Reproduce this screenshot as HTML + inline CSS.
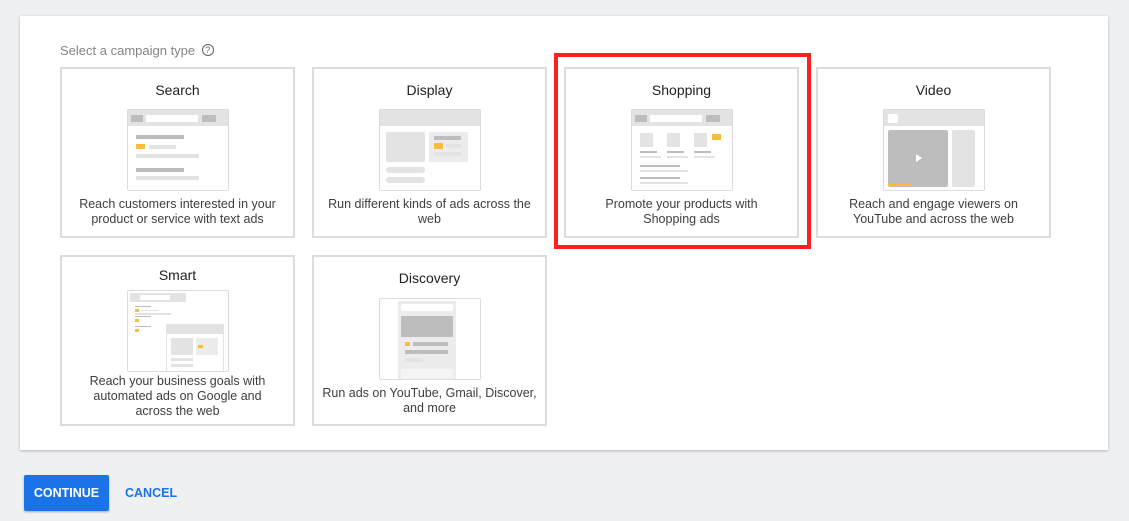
<!DOCTYPE html><html><head><style>
*{margin:0;padding:0;box-sizing:border-box}
body{width:1129px;height:521px;background:#eff0f2;font-family:"Liberation Sans",Arial,sans-serif;position:relative;overflow:hidden;color:#3c4043}
.panel{position:absolute;left:20px;top:16px;width:1088px;height:434px;background:#fff;box-shadow:0 1px 3px rgba(0,0,0,.25)}
.lbl{position:absolute;left:60px;top:43px;font-size:13px;color:#80868b}
.q{display:inline-block;width:12px;height:12px;border:1.3px solid #5f6368;border-radius:50%;font-size:9px;text-align:center;line-height:10px;color:#5f6368;vertical-align:2px;margin-left:3px}
.card{position:absolute;width:235px;height:171px;border:2px solid #dadce0;background:#fff}
.t{position:absolute;left:0;right:0;text-align:center;font-size:14px;color:#202124}
.d{position:absolute;left:0;right:0;text-align:center;font-size:12.5px;line-height:15px;color:#3c4043}
.ill{position:absolute;left:65px;width:102px;height:82px;border:1px solid #dadce0;border-radius:2px;background:#fff;overflow:hidden}
.ill div{position:absolute}
.g{background:#e3e3e3}.gd{background:#bdbdbd}.gl{background:#ececec}.y{background:#fbbc3c}
.red{position:absolute;left:554px;top:53px;width:257px;height:196px;border:4px solid #ff1f1f}
.btn{position:absolute;left:24px;top:475px;width:85px;height:36px;background:#1a73e8;color:#fff;font-size:12.5px;font-weight:bold;text-align:center;line-height:36px;border-radius:2px;box-shadow:0 1px 2px rgba(0,0,0,.3)}
.cancel{position:absolute;left:125px;top:486px;color:#1a73e8;font-size:12.5px;font-weight:bold}
</style></head><body>
<div class="panel"></div>
<div class="lbl">Select a campaign type <span class="q">?</span></div>

<div class="card" style="left:60px;top:67px">
<div class="t" style="top:13px">Search</div>
<div class="ill" style="top:40px">
<div class="g" style="left:0;top:0;width:102px;height:16px"></div>
<div class="gd" style="left:3px;top:5px;width:12px;height:7px"></div>
<div style="left:18px;top:5px;width:52px;height:7px;background:#fff"></div>
<div class="gd" style="left:74px;top:5px;width:14px;height:7px"></div>
<div class="gd" style="left:8px;top:25px;width:48px;height:4px"></div>
<div class="y" style="left:8px;top:34px;width:9px;height:5px"></div>
<div class="g" style="left:21px;top:35px;width:27px;height:4px"></div>
<div class="g" style="left:8px;top:44px;width:63px;height:4px"></div>
<div class="gd" style="left:8px;top:58px;width:48px;height:4px"></div>
<div class="g" style="left:8px;top:66px;width:63px;height:4px"></div>
</div>
<div class="d" style="top:128px">Reach customers interested in your<br>product or service with text ads</div>
</div>

<div class="card" style="left:312px;top:67px">
<div class="t" style="top:13px">Display</div>
<div class="ill" style="top:40px">
<div class="g" style="left:0;top:0;width:102px;height:16px"></div>
<div class="g" style="left:6px;top:22px;width:39px;height:30px;border-radius:2px"></div>
<div class="gl" style="left:49px;top:22px;width:39px;height:30px"></div>
<div class="gd" style="left:54px;top:26px;width:27px;height:4px"></div>
<div class="y" style="left:54px;top:33px;width:9px;height:6px"></div>
<div class="g" style="left:66px;top:34px;width:15px;height:4px"></div>
<div class="g" style="left:54px;top:42px;width:27px;height:4px"></div>
<div class="g" style="left:6px;top:57px;width:39px;height:6px;border-radius:3px"></div>
<div class="g" style="left:6px;top:67px;width:39px;height:6px;border-radius:3px"></div>
</div>
<div class="d" style="top:128px">Run different kinds of ads across the<br>web</div>
</div>

<div class="card" style="left:564px;top:67px">
<div class="t" style="top:13px">Shopping</div>
<div class="ill" style="top:40px">
<div class="g" style="left:0;top:0;width:102px;height:16px"></div>
<div class="gd" style="left:3px;top:5px;width:12px;height:7px"></div>
<div style="left:18px;top:5px;width:52px;height:7px;background:#fff"></div>
<div class="gd" style="left:74px;top:5px;width:14px;height:7px"></div>
<div class="g" style="left:8px;top:23px;width:13px;height:14px"></div>
<div class="g" style="left:35px;top:23px;width:13px;height:14px"></div>
<div class="g" style="left:62px;top:23px;width:13px;height:14px"></div>
<div class="y" style="left:80px;top:24px;width:9px;height:6px"></div>
<div class="gd" style="left:8px;top:41px;width:17px;height:2px"></div>
<div class="gd" style="left:35px;top:41px;width:17px;height:2px"></div>
<div class="gd" style="left:62px;top:41px;width:17px;height:2px"></div>
<div class="g" style="left:8px;top:46px;width:21px;height:2px"></div>
<div class="g" style="left:35px;top:46px;width:21px;height:2px"></div>
<div class="g" style="left:62px;top:46px;width:21px;height:2px"></div>
<div class="gd" style="left:8px;top:55px;width:40px;height:2px"></div>
<div class="g" style="left:8px;top:60px;width:48px;height:2px"></div>
<div class="gd" style="left:8px;top:67px;width:40px;height:2px"></div>
<div class="g" style="left:8px;top:72px;width:48px;height:2px"></div>
</div>
<div class="d" style="top:128px">Promote your products with<br>Shopping ads</div>
</div>

<div class="card" style="left:816px;top:67px">
<div class="t" style="top:13px">Video</div>
<div class="ill" style="top:40px">
<div class="g" style="left:0;top:0;width:102px;height:16px"></div>
<div style="left:4px;top:4px;width:10px;height:9px;background:#fff;border-radius:2px"></div>
<div class="gd" style="left:4px;top:20px;width:60px;height:57px;border-radius:2px"></div>
<div style="left:32px;top:44px;width:0;height:0;border-left:6px solid #fff;border-top:4px solid transparent;border-bottom:4px solid transparent"></div>
<div class="y" style="left:4px;top:74px;width:23px;height:2px"></div>
<div class="g" style="left:68px;top:20px;width:23px;height:57px;border-radius:2px"></div>
</div>
<div class="d" style="top:128px">Reach and engage viewers on<br>YouTube and across the web</div>
</div>

<div class="card" style="left:60px;top:255px">
<div class="t" style="top:10px">Smart</div>
<div class="ill" style="top:33px">
<div class="g" style="left:2px;top:2px;width:56px;height:9px"></div>
<div style="left:12px;top:4px;width:30px;height:5px;background:#fff"></div>
<div class="gd" style="left:7px;top:15px;width:16px;height:1px"></div>
<div class="y" style="left:7px;top:18px;width:4px;height:3px"></div>
<div class="g" style="left:13px;top:19px;width:18px;height:1px"></div>
<div class="g" style="left:7px;top:22px;width:36px;height:2px"></div>
<div class="gd" style="left:7px;top:25px;width:16px;height:1px"></div>
<div class="y" style="left:7px;top:28px;width:4px;height:3px"></div>
<div class="gd" style="left:7px;top:35px;width:16px;height:1px"></div>
<div class="y" style="left:7px;top:38px;width:4px;height:3px"></div>
<div style="left:38px;top:33px;width:58px;height:48px;background:#fff;border:1px solid #e3e3e3"></div>
<div class="g" style="left:38px;top:33px;width:58px;height:10px"></div>
<div class="g" style="left:43px;top:47px;width:22px;height:17px"></div>
<div class="gl" style="left:68px;top:47px;width:22px;height:17px"></div>
<div class="y" style="left:70px;top:54px;width:5px;height:3px"></div>
<div class="g" style="left:43px;top:67px;width:22px;height:3px"></div>
<div class="g" style="left:43px;top:73px;width:22px;height:3px"></div>
</div>
<div class="d" style="top:117px">Reach your business goals with<br>automated ads on Google and<br>across the web</div>
</div>

<div class="card" style="left:312px;top:255px">
<div class="t" style="top:13px">Discovery</div>
<div class="ill" style="top:41px">
<div class="gl" style="left:18px;top:2px;width:58px;height:80px"></div>
<div style="left:21px;top:5px;width:52px;height:7px;background:#fff;border-radius:2px"></div>
<div class="gd" style="left:21px;top:17px;width:52px;height:21px"></div>
<div class="y" style="left:25px;top:43px;width:5px;height:4px"></div>
<div class="gd" style="left:33px;top:43px;width:35px;height:4px"></div>
<div class="gd" style="left:25px;top:51px;width:43px;height:4px"></div>
<div class="g" style="left:25px;top:59px;width:18px;height:4px"></div>
<div style="left:21px;top:70px;width:52px;height:10px;background:#f4f4f4"></div>
</div>
<div class="d" style="top:129px">Run ads on YouTube, Gmail, Discover,<br>and more</div>
</div>

<div class="red"></div>
<div class="btn">CONTINUE</div>
<div class="cancel">CANCEL</div>
</body></html>
